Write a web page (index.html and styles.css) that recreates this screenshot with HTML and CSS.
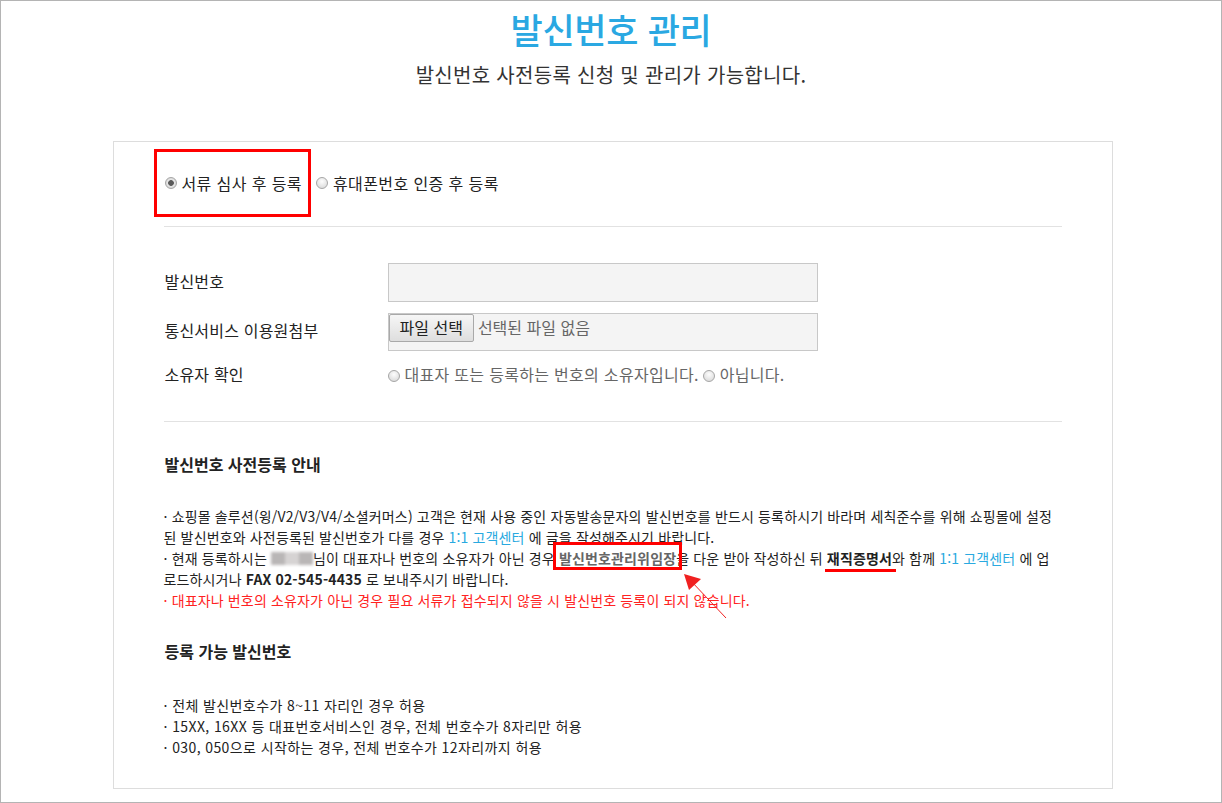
FILE: index.html
```html
<!DOCTYPE html>
<html lang="ko">
<head>
  <meta charset="UTF-8">
  <title>발신번호 관리</title>
  <link rel="stylesheet" href="styles.css">
</head>
<body>
  <div class="page">
    <h1 class="title">발신번호 관리</h1>
    <p class="subtitle">발신번호 사전등록 신청 및 관리가 가능합니다.</p>

    <div class="card">
      <div class="reg-type">
        <label class="radio"><input type="radio" name="regtype" checked> 서류 심사 후 등록</label>
        <label class="radio"><input type="radio" name="regtype"> 휴대폰번호 인증 후 등록</label>
        <span class="mark-box mark-type"></span>
      </div>

      <hr class="line">

      <div class="form">
        <div class="row">
          <div class="label">발신번호</div>
          <div class="field"><input type="text" class="text-input"></div>
        </div>
        <div class="row">
          <div class="label">통신서비스 이용원첨부</div>
          <div class="field">
            <div class="file-box"><span class="file-btn">파일 선택</span><span class="file-none">선택된 파일 없음</span></div>
          </div>
        </div>
        <div class="row">
          <div class="label">소유자 확인</div>
          <div class="field owner">
            <label class="radio small"><input type="radio" name="owner"> 대표자 또는 등록하는 번호의 소유자입니다.</label>
            <label class="radio small"><input type="radio" name="owner"> 아닙니다.</label>
          </div>
        </div>
      </div>

      <hr class="line line-bottom">

      <h3 class="sec-title">발신번호 사전등록 안내</h3>
      <p class="guide">
        · 쇼핑몰 솔루션(윙/V2/V3/V4/소셜커머스) 고객은 현재 사용 중인 자동발송문자의 발신번호를 반드시 등록하시기 바라며 세칙준수를 위해 쇼핑몰에 설정된 발신번호와 사전등록된 발신번호가 다를 경우 <a class="link">1:1 고객센터</a> 에 글을 작성해주시기 바랍니다.<br>
        · 현재 등록하시는 <span class="masked"><i></i><i></i><i></i></span>님이 대표자나 번호의 소유자가 아닌 경우 <span class="doc">발신번호관리위임장<span class="mark-box mark-doc"></span></span>을 다운 받아 작성하신 뒤 <b class="proof">재직증명서<span class="mark-line"></span></b>와 함께 <a class="link">1:1 고객센터</a> 에 업로드하시거나 <b>FAX 02-545-4435</b> 로 보내주시기 바랍니다.<br>
        <span class="warn">· 대표자나 번호의 소유자가 아닌 경우 필요 서류가 접수되지 않을 시 발신번호 등록이 되지 않습니다.</span>
      </p>

      <h3 class="sec-title">등록 가능 발신번호</h3>
      <ul class="allow">
        <li>· 전체 발신번호수가 8~11 자리인 경우 허용</li>
        <li>· 15XX, 16XX 등 대표번호서비스인 경우, 전체 번호수가 8자리만 허용</li>
        <li>· 030, 050으로 시작하는 경우, 전체 번호수가 12자리까지 허용</li>
      </ul>

      <svg class="arrow" width="60" height="60" viewBox="0 0 60 60">
        <line x1="45" y1="47" x2="10" y2="10" stroke="#f02020" stroke-width="1"/>
        <polygon points="3,3 20,8 8,19" fill="#f02020"/>
      </svg>
    </div>
  </div>
</body>
</html>
```

FILE: styles.css
```css
* {
  margin: 0;
  padding: 0;
  box-sizing: border-box;
}

body {
  width: 1222px;
  height: 803px;
  border: 1px solid #b4b4b4;
  background: #fff;
  font-family: "Noto Sans CJK KR", "Noto Sans", sans-serif;
  color: #222;
  overflow: hidden;
}

.page {
  display: flex;
  flex-direction: column;
  align-items: center;
}

.title {
  margin-top: 6px;
  font-size: 35px;
  line-height: 44px;
  font-weight: 500;
  color: #2aa8e2;
  letter-spacing: -0.3px;
}

.subtitle {
  margin-top: 10px;
  font-size: 20px;
  line-height: 28px;
  letter-spacing: 0.3px;
  color: #333;
}

.card {
  position: relative;
  width: 1000px;
  margin-top: 52px;
  margin-left: 3px;
  border: 1px solid #ddd;
  background: #fff;
  padding: 26px 50px 30px 50px;
}

.reg-type {
  position: relative;
  display: flex;
  align-items: center;
  height: 30px;
  font-size: 16px;
  letter-spacing: 0.4px;
}

.radio {
  display: inline-flex;
  align-items: center;
  margin-right: 13px;
}

.radio input {
  appearance: none;
  width: 12px;
  height: 12px;
  margin: 0 5px 0 1px;
  border-radius: 50%;
  border: 1px solid #a6a6a6;
  background: radial-gradient(circle at 50% 35%, #fdfdfd, #d4d4d4);
}

.radio input:checked {
  background: radial-gradient(circle, #5a5a5a 0, #5a5a5a 2.5px, #e8e8e8 3.2px, #d0d0d0 6px);
}

.mark-box {
  position: absolute;
  border: 3px solid #f00;
}

.mark-type {
  left: -10px;
  top: -19px;
  width: 157px;
  height: 68px;
}

.line {
  border: 0;
  border-top: 1px solid #e2e2e2;
  margin-top: 28px;
}

.line-bottom {
  margin-top: 0;
}

.form {
  display: flex;
  flex-direction: column;
  gap: 11px;
  padding: 36px 0 31px 0;
}

.row {
  display: flex;
  align-items: center;
}

.label {
  width: 224px;
  font-size: 16px;
  letter-spacing: 0.2px;
  padding-left: 1px;
  margin-bottom: 4px;
}

.field {
  width: 430px;
}

.text-input {
  display: block;
  width: 430px;
  height: 39px;
  border: 1px solid #c8c8c8;
  background: #f4f4f4;
}

.file-box {
  display: flex;
  align-items: flex-start;
  height: 38px;
  border: 1px solid #c8c8c8;
  background: #f4f4f4;
}

.file-btn {
  height: 28px;
  padding: 0 10px 0 10px;
  border: 1px solid #a9a9a9;
  border-radius: 2px;
  background: linear-gradient(#f6f6f6, #dedede);
  font-size: 16px;
  line-height: 25px;
  color: #222;
}

.file-none {
  margin-left: 4px;
  font-size: 16px;
  line-height: 27px;
  color: #666;
}

.owner {
  width: auto;
  display: flex;
  color: #666;
  margin-bottom: 4px;
}

.radio.small {
  font-size: 16px;
  letter-spacing: 0.3px;
  margin-right: 4px;
}

.owner .radio input {
  margin-left: 0;
  margin-top: 3px;
}

.line + .sec-title {
  margin-top: 30px;
}

.sec-title {
  font-size: 16px;
  line-height: 24px;
  font-weight: 700;
  color: #222;
  padding-left: 1px;
}

.guide {
  margin-top: 30px;
  font-size: 14px;
  letter-spacing: 0.15px;
  line-height: 21px;
  color: #222;
}

.guide + .sec-title {
  margin-top: 28px;
}

.link {
  color: #29a9e0;
}

.masked {
  display: inline-block;
  width: 42px;
  height: 13px;
  vertical-align: -1px;
  filter: blur(1.5px);
}

.masked i {
  display: inline-block;
  width: 14px;
  height: 13px;
  background: #b9b6b6;
}

.masked i:nth-child(2) {
  background: #d6d3d3;
}

.doc {
  position: relative;
  font-weight: 700;
  color: #666;
}

.mark-doc {
  left: -6px;
  top: -6px;
  right: -6px;
  bottom: -2px;
}

.proof {
  position: relative;
}

.mark-line {
  position: absolute;
  left: -2px;
  right: -4px;
  bottom: -4px;
  height: 3px;
  background: #f00;
}

.warn {
  color: #f22;
}

.allow {
  list-style: none;
  margin-top: 32px;
  font-size: 14px;
  letter-spacing: 0.4px;
  line-height: 21px;
  color: #222;
}

.arrow {
  position: absolute;
  left: 567px;
  top: 429px;
}
```
